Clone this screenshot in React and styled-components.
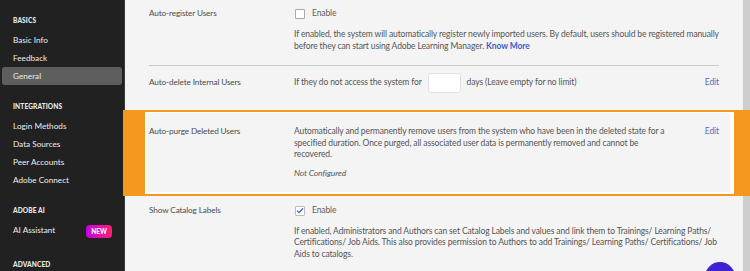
import React from "react";
import styled, { createGlobalStyle } from "styled-components";

const GlobalStyle = createGlobalStyle`
  html, body {
    margin: 0;
    padding: 0;
    width: 750px;
    height: 271px;
    overflow: hidden;
    font-family: "Lato", "Open Sans", sans-serif;
  }
`;

const sections = [
  { title: "BASICS", items: ["Basic Info", "Feedback", "General"] },
  {
    title: "INTEGRATIONS",
    items: ["Login Methods", "Data Sources", "Peer Accounts", "Adobe Connect"],
  },
  { title: "ADOBE AI", items: ["AI Assistant"] },
  { title: "ADVANCED", items: [] },
];

const App = () => {
  return (
    <>
      <GlobalStyle />
      <Shell>
        <Sidebar>
          {sections.map((section) => (
            <Section key={section.title}>
              <SectionTitle>{section.title}</SectionTitle>
              {section.items.map((item) => (
                <NavItem key={item} active={item === "General"}>
                  {item}
                  {item === "AI Assistant" && <NewBadge>NEW</NewBadge>}
                </NavItem>
              ))}
            </Section>
          ))}
        </Sidebar>

        <Main>
          <Row first>
            <Label>Auto-register Users</Label>
            <Body>
              <CheckLine>
                <Checkbox />
                <span>Enable</span>
              </CheckLine>
              <Description>
                If enabled, the system will automatically register newly
                imported users. By default, users should be registered manually
                <br />
                before they can start using Adobe Learning Manager.{" "}
                <Link>Know More</Link>
              </Description>
            </Body>
          </Row>

          <Row inline>
            <Label>Auto-delete Internal Users</Label>
            <Body>
              <InlineLine>
                If they do not access the system for
                <DaysInput />
                days (Leave empty for no limit)
              </InlineLine>
            </Body>
            <EditLink>Edit</EditLink>
          </Row>

          <Row highlighted>
            <Label>Auto-purge Deleted Users</Label>
            <Body>
              <Description flush>
                Automatically and permanently remove users from the system who
                have been in the deleted state for a
                <br />
                specified duration. Once purged, all associated user data is
                permanently removed and cannot be
                <br />
                recovered.
              </Description>
              <Status>Not Configured</Status>
            </Body>
            <EditLink>Edit</EditLink>
          </Row>

          <Row>
            <Label>Show Catalog Labels</Label>
            <Body>
              <CheckLine>
                <Checkbox checked>
                  <svg width="8" height="7" viewBox="0 0 8 7">
                    <path
                      d="M1 3.6 L3 5.6 L7 1.2"
                      fill="none"
                      stroke="#3f66c8"
                      strokeWidth="1.3"
                    />
                  </svg>
                </Checkbox>
                <span>Enable</span>
              </CheckLine>
              <Description>
                If enabled, Administrators and Authors can set Catalog Labels
                and values and link them to Trainings/ Learning Paths/
                <br />
                Certifications/ Job Aids. This also provides permission to
                Authors to add Trainings/ Learning Paths/ Certifications/ Job
                <br />
                Aids to catalogs.
              </Description>
            </Body>
          </Row>

          <HelpBubble />
        </Main>
        <Scrollbar />
      </Shell>
    </>
  );
};

export default App;

const Shell = styled.div`
  display: flex;
  width: 750px;
  height: 271px;
  overflow: hidden;
  background: #f4f4f4;
`;

const Sidebar = styled.nav`
  width: 125px;
  flex-shrink: 0;
  background: #212121;
  border-right: 1px solid #3a3a3a;
  padding-top: 14px;
  box-sizing: border-box;
`;

const Section = styled.div`
  margin-bottom: 15px;
  &:nth-child(3) {
    margin-bottom: 19px;
  }
`;

const SectionTitle = styled.div`
  padding-left: 13px;
  height: 12px;
  line-height: 12px;
  margin-bottom: 5px;
  font-size: 6.6px;
  font-weight: 900;
  letter-spacing: 0.1px;
  color: #e8e8e8;
`;

const NavItem = styled.div`
  display: flex;
  align-items: center;
  justify-content: space-between;
  height: 18px;
  margin: 0 2px;
  padding: 0 11px;
  border-radius: 3px;
  font-size: 8.2px;
  color: #ececec;
  background: ${(p) => (p.active ? "#5e5e5e" : "transparent")};
`;

const NewBadge = styled.span`
  display: inline-flex;
  align-items: center;
  justify-content: center;
  width: 26px;
  height: 13px;
  margin-right: -1px;
  margin-top: 2px;
  border-radius: 4px;
  background: linear-gradient(90deg, #c200e6, #ff1f6e);
  color: #fff;
  font-size: 6.5px;
  font-weight: 900;
`;

const Main = styled.main`
  position: relative;
  flex: 1;
  padding: 0 24px;
  box-sizing: border-box;
`;

const Scrollbar = styled.div`
  width: 8px;
  flex-shrink: 0;
  background: #cdcdcd;
`;

const Row = styled.section`
  position: relative;
  display: flex;
  align-items: ${(p) => (p.inline ? "center" : "flex-start")};
  padding: ${(p) =>
    p.first ? "8px 0 13px" : p.inline ? "7px 0 17px" : p.highlighted ? "15px 0 12px" : "12px 0 12px"};
  border-bottom: 1px solid #c9c9c9;
  font-size: 8.5px;
  letter-spacing: -0.12px;
  line-height: 11.6px;
  color: #4b4b4b;

  ${(p) =>
    p.highlighted &&
    `
    &::after {
      content: "";
      position: absolute;
      top: -1px;
      bottom: -4px;
      left: -26px;
      right: -32px;
      border: solid #f5981f;
      border-width: 2px 17px 2px 22px;
      box-shadow: inset 2px 1px 0 #fff, inset -4px 0 0 #fff, inset 0 -2px 0 #fff;
      pointer-events: none;
    }
  `}
`;

const Label = styled.div`
  width: 145px;
  flex-shrink: 0;
  font-size: 8.2px;
  color: #4b4b4b;
`;

const Body = styled.div`
  flex: 1;
`;

const CheckLine = styled.div`
  display: flex;
  align-items: center;
  gap: 7px;
  height: 12px;
  color: #606060;
`;

const Checkbox = styled.span`
  display: inline-flex;
  align-items: center;
  justify-content: center;
  width: 10px;
  height: 10px;
  box-sizing: border-box;
  margin-left: 1px;
  border: 1px solid ${(p) => (p.checked ? "#bdbdbd" : "#a8a8a8")};
  border-radius: 1px;
  background: #fff;
`;

const Description = styled.p`
  margin: ${(p) => (p.flush ? "0" : "9px 0 0")};
  white-space: nowrap;
  color: #555;
`;

const Status = styled.p`
  margin: 7px 0 0;
  font-style: italic;
  color: #5a5a5a;
`;

const Link = styled.a`
  color: #3a5fcd;
  font-weight: 700;
`;

const InlineLine = styled.div`
  display: flex;
  align-items: center;
  gap: 6px;
  color: #555;
`;

const DaysInput = styled.span`
  display: inline-block;
  width: 33px;
  height: 20px;
  box-sizing: border-box;
  border: 1px solid #e2e2e2;
  border-radius: 3px;
  background: #fff;
`;

const EditLink = styled.a`
  margin-left: auto;
  color: #4a6cc4;
`;

const HelpBubble = styled.div`
  position: absolute;
  right: 8px;
  top: 262px;
  width: 30px;
  height: 30px;
  border-radius: 50%;
  background: #3f22d0;
`;
